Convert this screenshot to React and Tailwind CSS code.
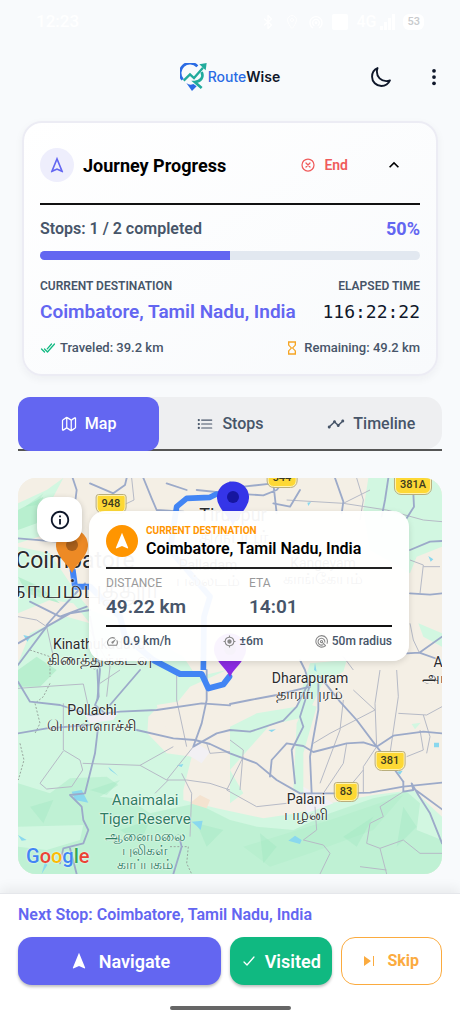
import { useState } from 'react';
import {
  IoBluetooth,
  IoCheckmark,
  IoCheckmarkDoneOutline,
  IoCloseCircleOutline,
  IoEllipsisVertical,
  IoListOutline,
  IoLocationOutline,
  IoMapOutline,
  IoMoonOutline,
} from 'react-icons/io5';
import {
  MdHourglassEmpty,
  MdKeyboardArrowUp,
  MdMyLocation,
  MdNavigation,
  MdOutlineInfo,
  MdOutlineNavigation,
  MdSpeed,
  MdTimeline,
  MdWifiTethering,
} from 'react-icons/md';

const MAP_W = 424;
const MAP_H = 396;

const town = { nameClass: 'text-[14px] leading-[16px]', localClass: 'text-[16px] leading-[16px]' };
const city = { nameClass: 'text-[23px] leading-[28px]', localClass: 'text-[26px] leading-[28px]' };

const places = [
  { name: 'Coimbatore', local: 'கோயம்புத்தூர்', x: 57, y: 97, ...city },
  { name: 'Tiruppur', local: 'திருப்பூர்', x: 215, y: 48, nameClass: 'text-[18px] leading-[22px]', localClass: 'text-[18px] leading-[22px]' },
  { name: 'Palladam', local: 'பல்லடம்', x: 190, y: 95, ...town },
  { name: 'Kangeyam', local: 'காங்கேயம்', x: 305, y: 93, ...town },
  { name: 'Kinathukadavu', local: 'கிணத்துக்கடவு', x: 81, y: 174, ...town },
  { name: 'Dharapuram', local: 'தாராபுரம்', x: 292, y: 208, ...town },
  { name: 'Pollachi', local: 'பொள்ளாச்சி', x: 74, y: 240, ...town },
  { name: 'Palani', local: 'பழனி', x: 288, y: 329, ...town },
  { name: 'Aravakurichi', local: 'அரவக்குறிச்சி', x: 454, y: 192, ...town },
];

const roads = [
  // main highways
  'M188 24 L200 60 195 100 190 300 M350 24 L345 45 310 70 240 40 M400 24 L425 85 440 120 520 125',
  'M24 205 L140 215 M24 585 L110 470 180 430 240 420 M110 465 L150 420 225 340 M60 395 L150 440 230 410',
  'M24 520 L60 500 110 470 M240 440 L270 600 262 690',
  'M560 60 L660 70 760 76 800 60 830 24 M470 40 L530 60 M660 36 L700 50 790 40 800 130 M975 24 L1000 95 995 130',
  'M790 100 L840 110 870 60 M1210 70 L1212 110 1190 145 M1135 24 L1125 90 1115 140 M1200 240 L1260 215 1296 213',
  'M1200 370 L1260 374 1296 370 M1190 550 L1228 548 1296 500 M1228 548 L1290 570 M870 570 L885 600 900 650',
  'M262 600 L266 680 255 705 285 730 M390 600 L300 705 M24 635 L60 695 150 705 240 735 330 725 440 720 575 700 660 706',
  'M24 790 L110 775 240 765 M380 780 L490 805 555 810 600 822 660 850 740 880 800 930 870 970 990 970 1080 968 1180 950 1296 938',
  'M590 600 L590 690 575 760 550 830 620 790 660 780 720 785 820 752 860 710 895 640',
  'M660 702 L720 690 800 675 900 650 M900 645 L870 740 880 770 845 840 855 940 M925 640 L925 720 900 860 905 970',
  'M930 620 L990 695 1040 750 1100 830 1140 880 1180 935',
  'M780 920 L785 870 830 820 880 828 910 846 1010 820 1060 817 1100 830 1150 797 1240 785 1296 790',
  'M1180 935 L1180 965 1210 960 1205 940 1225 975 1260 1030 1296 1120 M1210 955 L1296 1018',
  'M265 765 L255 850 225 970 180 975 215 1010 220 1050 235 1080 220 1120 160 1135 150 1180 M180 1135 L200 1212',
  'M490 1212 L515 1130 510 1110',
];

const lanes = [
  'M24 440 L80 450 110 470 130 560 M330 110 L372 90 365 24 M24 655 L220 642 235 710 M160 700 L160 840 210 870 218 900 185 950 110 957 90 940 160 843',
  'M218 880 L390 886 490 830 M390 886 L470 930 530 930 600 940 660 960 M475 930 L435 970 M470 930 L550 830 M515 910 L545 970 540 1100',
  'M500 600 L500 690 530 830 M660 810 L700 840 690 960 M700 860 L650 960 740 1010 830 1000 M590 820 L600 850 660 845',
  'M830 90 L1000 100 1080 60 M1000 100 L1130 120 1240 150 1296 155 M1040 24 L1060 90 1050 150 M1200 270 L1240 285 1230 370 M1240 290 L1290 290',
  'M1110 600 L1095 700 1100 830 M1160 600 L1165 680 1140 850 M1030 660 L1095 720 960 790 910 820 M1165 730 L1250 735 1296 710 M1240 735 L1260 800 1250 850',
  'M1000 690 L990 780 930 940 M1010 820 L1000 880 940 970 M1060 900 L1010 960 M1100 830 L1060 890 1060 970 M1190 860 L1240 840 1230 780',
  'M1030 600 L1000 560 M1200 460 L1210 510 1228 548 M240 480 L300 590 290 680 M330 600 L270 640',
  'M1180 965 L1110 1010 1120 1040 1080 1060 1070 1120 1110 1135 1180 1110 1230 1150 1296 1150 M1110 1135 L1130 1212',
  'M915 1010 L920 1080 880 1110 940 1125 960 1150 930 1212 M1050 1190 L1130 1200',
];

// Map artwork is drawn at three units per pixel.
function MapArtwork() {
  return (
    <svg className="absolute inset-0 h-full w-full" viewBox="24 24 1272 1188" preserveAspectRatio="none" aria-hidden="true">
      <rect x="24" y="24" width="1272" height="1188" fill="#f4efe5" />
      <g fill="#d2f7e1">
        <path d="M24 100 L110 60 160 24 125 90 150 180 24 220 Z" />
        <path d="M24 230 L120 250 200 370 240 420 340 460 520 560 560 620 650 600 540 650 500 700 450 705 415 740 412 790 470 850 545 860 520 960 520 990 620 1015 760 1045 860 1030 960 1000 1090 975 1210 960 1296 1040 1296 1212 24 1212 Z" />
        <path d="M1075 24 L1296 24 1296 230 1220 260 1200 310 1080 240 1060 120 Z" />
        <path d="M1225 460 L1296 490 1296 530 1240 500 Z M900 580 L1010 570 1000 605 940 635 890 740 780 765 660 900 700 970 660 1000 660 770 740 730 860 710 Z" />
        <path d="M860 760 L890 700 920 710 880 850 880 970 850 960 Z M1205 762 L1232 758 1215 778 Z" />
      </g>
      <path d="M24 430 L120 390 190 400 240 460 170 440 60 490 24 580 Z M430 30 L560 24 500 60 Z" fill="#f4efe5" />
      <path d="M440 705 L500 695 540 705 540 770 480 800 Z" fill="#f4efe5" />
      <g fill="#b8efcf">
        <path d="M24 940 L120 970 180 925 290 920 325 945 270 980 360 990 420 1030 560 1000 660 1050 740 1070 850 1080 960 1030 1090 985 1190 965 1230 1000 1220 1080 1296 1110 1296 1212 24 1212 Z" opacity=".75" />
        <path d="M24 120 L100 80 80 160 24 180 Z M24 320 L90 350 150 400 50 370 Z M24 600 L80 560 140 600 90 650 24 650 Z" />
        <path d="M960 1050 L1180 975 1090 1080 900 1150 780 1190 700 1130 Z" />
      </g>
      <g fill="#99e3bc" opacity=".3">
        <path d="M240 960 L330 930 290 975 Z M60 1010 L130 990 100 1060 Z M330 1080 L420 1050 390 1120 Z M560 1060 L640 1080 590 1130 Z" />
        <path d="M1180 1010 L1220 1070 1160 1130 Z M1000 1100 L1090 1040 1040 1130 Z M750 1090 L800 1130 760 1180 Z" />
        <path d="M45 110 L100 70 80 105 Z M60 340 L100 370 50 360 Z" />
      </g>
      <path d="M24 1070 L220 1065 210 1110 110 1140 24 1130 Z" fill="#d2f7e1" />
      <path d="M535 855 L555 815 600 845 575 880 Z M225 735 L330 720 310 750 240 760 Z M880 950 L970 1000 890 1030 Z" fill="#f2f0f4" />
      <path d="M540 1000 L570 975 600 990 590 1015 Z" fill="#f4e3d0" />
      <g fill="#8ad8ee">
        <path d="M185 965 L215 960 235 998 195 990 Z M295 890 L325 918 300 900 Z M500 886 L520 882 515 891 Z M545 1055 L578 1052 572 1080 560 1068 Z" />
        <path d="M835 1112 L855 1097 875 1110 870 1122 Z M1272 818 H1287 V832 H1272 Z M1255 258 L1270 268 1262 275 Z M892 98 L903 96 895 108 Z M24 1095 L50 1110 35 1112 Z" />
        <path d="M40 495 L62 500 52 515 Z M775 780 L798 778 785 786 Z M1160 905 L1178 902 1170 914 Z M95 1212 L105 1175 112 1185 Z M915 580 L920 605 912 600 Z" />
      </g>
      <g fill="none" stroke="#b6bac6" strokeWidth="3" strokeLinejoin="round">
        {lanes.map((d) => (
          <path key={d} d={d} />
        ))}
      </g>
      <path d="M120 640 L100 680 75 700 90 760 75 790 M30 820 L42 870 25 930 M60 540 L120 560 120 620 M480 1130 H535 L530 1180 545 1212" fill="none" stroke="#9aa79f" strokeWidth="3" strokeDasharray="6 5" />
      <g fill="none" stroke="#9caac9" strokeWidth="5.5" strokeLinejoin="round" strokeLinecap="round">
        {roads.map((d) => (
          <path key={d} d={d} />
        ))}
      </g>
      <path d="M188 300 L195 350 240 350 330 440 345 500 430 570 510 612 575 612 595 655 640 643 658 620" fill="none" stroke="#4285f4" strokeWidth="18" strokeLinejoin="round" strokeLinecap="round" />
      <path d="M580 600 L582 440 600 380 480 240 500 110 530 85 600 82 620 72 660 82" fill="none" stroke="#4285f4" strokeWidth="17" strokeLinejoin="round" />
    </svg>
  );
}

function MapPin({ x, y, fill, dot }) {
  return (
    <svg
      className="absolute h-11 w-8 -translate-x-1/2 -translate-y-full"
      style={{ left: `${(x / MAP_W) * 100}%`, top: `${(y / MAP_H) * 100}%` }}
      viewBox="0 0 32 44"
      aria-hidden="true"
    >
      <path d="M16 44 C13 37 6 32 2.5 25 A16 16 0 1 1 29.5 25 C26 32 19 37 16 44 Z" fill={fill} />
      <circle cx="16" cy="16" r="6" fill={dot} />
    </svg>
  );
}

function RoadShield({ x, y, children }) {
  return (
    <span
      className="absolute -translate-x-1/2 -translate-y-1/2 rounded-b-md rounded-t-xs border border-[#fff3b0] bg-[#fdd835] px-1 text-[11px] font-medium leading-4 text-[#3c3a20] outline outline-[#b9ae7c]"
      style={{ left: `${(x / MAP_W) * 100}%`, top: `${(y / MAP_H) * 100}%` }}
    >
      {children}
    </span>
  );
}

function MapLabel({ place }) {
  return (
    <div
      className="absolute flex -translate-x-1/2 -translate-y-1/2 flex-col items-center whitespace-nowrap text-[#2b2b2b] [text-shadow:0_0_2px_#fff,0_0_2px_#fff]"
      style={{ left: `${(place.x / MAP_W) * 100}%`, top: `${(place.y / MAP_H) * 100}%` }}
    >
      <span className={place.nameClass}>{place.name}</span>
      <span className={place.localClass}>{place.local}</span>
    </div>
  );
}

function Logo() {
  return (
    <svg className="h-7 w-7" viewBox="0 0 80 84" fill="none" aria-hidden="true">
      <path d="M6 50 A28 28 0 0 1 50 10" stroke="#2b6be4" strokeWidth="8" />
      <path d="M63 27 C70 43 60 56 42 57 L63 75" stroke="#22ab9c" strokeWidth="8" />
      <path d="M17 60 Q27 68 38 63 L48 70 L34 84 Z" fill="#2b6be4" />
      <path d="M9 53 L28 34 L40 45 L67 14" stroke="#22ab9c" strokeWidth="7" />
      <path d="M56 4 L78 0 L75 22 Z" fill="#22ab9c" />
    </svg>
  );
}

function RadiusIcon() {
  return (
    <svg className="h-[13px] w-[13px]" viewBox="0 0 24 24" fill="none" stroke="currentColor" strokeWidth="2" aria-hidden="true">
      <path d="M19.5 19.5 A10.6 10.6 0 1 1 22 16" />
      <path d="M15.5 17.5 A6.3 6.3 0 1 1 18 14" />
      <circle cx="12" cy="12" r="2" />
      <path d="M13.5 13.5 L20 20" />
    </svg>
  );
}

function StatusBar() {
  return (
    <div className="flex h-11 items-center justify-between px-9 text-white">
      <span className="text-[17px] font-medium">12:23</span>
      <div className="flex items-center gap-2">
        <IoBluetooth className="h-4 w-4" />
        <IoLocationOutline className="h-4 w-4" />
        <MdWifiTethering className="h-4 w-4" />
        <span className="h-4 w-4 rounded-xs bg-white" />
        <span className="text-base font-medium">4G</span>
        <span className="-ml-1 flex items-end gap-px">
          <span className="h-1 w-[3px] bg-white" />
          <span className="h-2 w-[3px] bg-white" />
          <span className="h-3 w-[3px] bg-white" />
          <span className="h-4 w-[3px] bg-white" />
        </span>
        <span className="rounded-md bg-white px-1 text-[11px] font-medium leading-4 text-[#c9cbcd]">53</span>
      </div>
    </div>
  );
}

function JourneyCard() {
  const [open, setOpen] = useState(true);
  const progress = 50;

  return (
    <section className="mx-[22px] rounded-[20px] border-2 border-[#ececf4] bg-linear-to-br from-white to-[#f8fafc] px-4 pb-4 shadow-[0_3px_8px_rgba(30,41,59,0.05)]">
      <div className="flex h-[82px] items-center border-b-2 border-[#111] pt-1">
        <span className="flex h-[34px] w-[34px] items-center justify-center rounded-full bg-[#eeeefc] text-[#6366f1]">
          <MdOutlineNavigation className="h-5 w-5" />
        </span>
        <h2 className="ml-[9px] flex-1 text-[18px] font-bold text-black">Journey Progress</h2>
        <button type="button" className="flex items-center gap-2 text-sm font-semibold text-[#f05b5b]">
          <IoCloseCircleOutline className="h-4 w-4 [&_path]:[stroke-width:40]" />
          End
        </button>
        <button type="button" aria-label="Toggle details" className="ml-9 mr-4 text-black" onClick={() => setOpen(!open)}>
          <MdKeyboardArrowUp className="h-5 w-5" />
        </button>
      </div>
      {open && (
        <>
          <div className="mt-3 flex items-center justify-between leading-6">
            <span className="text-base font-semibold text-[#475569]">Stops: 1 / 2 completed</span>
            <span className="text-[18px] font-bold text-[#6366f1]">{progress}%</span>
          </div>
          <div className="mt-2.5 h-[9px] overflow-hidden rounded-full bg-[#e2e8f0]">
            <div className="h-full bg-[#6366f1]" style={{ width: `${progress}%` }} />
          </div>
          <div className="mt-[18px] flex justify-between text-xs font-semibold text-[#475569]">
            <span>CURRENT DESTINATION</span>
            <span>ELAPSED TIME</span>
          </div>
          <div className="mt-1 flex items-center justify-between whitespace-nowrap text-[19px] leading-7">
            <span className="font-semibold text-[#6366f1]">Coimbatore, Tamil Nadu, India</span>
            <span className="font-['DejaVu_Sans_Mono',monospace] text-[18px] text-[#0f172a]">116:22:22</span>
          </div>
          <div className="mt-3 flex items-center justify-between text-[13px] font-medium leading-5 text-[#475569]">
            <span className="flex items-center gap-1">
              <IoCheckmarkDoneOutline className="h-4 w-4 text-[#10b981] [&_path]:[stroke-width:40]" />
              Traveled: 39.2 km
            </span>
            <span className="flex items-center gap-1">
              <MdHourglassEmpty className="h-4 w-4 text-[#f5a524]" />
              Remaining: 49.2 km
            </span>
          </div>
        </>
      )}
    </section>
  );
}

const tabs = [
  { id: 'map', label: 'Map', icon: <IoMapOutline className="h-4 w-4 [&_path]:[stroke-width:40]" /> },
  { id: 'stops', label: 'Stops', icon: <IoListOutline className="h-[18px] w-[18px]" /> },
  { id: 'timeline', label: 'Timeline', icon: <MdTimeline className="h-[18px] w-[18px]" /> },
];

function Tabs() {
  const [active, setActive] = useState('map');

  return (
    <div role="tablist" className="relative mx-[18px] mt-[21px] grid grid-cols-3 border-b-2 border-[#555]">
      <div className="absolute inset-0 rounded-2xl bg-[#eeeff1]" />
      {tabs.map(({ id, label, icon }) => (
        <button
          key={id}
          type="button"
          role="tab"
          aria-selected={active === id}
          onClick={() => setActive(id)}
          className={`relative -mb-0.5 flex h-[54px] items-center justify-center gap-2 rounded-xl text-base font-medium ${
            active === id ? 'bg-[#6366f1] text-white' : 'text-[#475569]'
          }`}
        >
          {icon}
          {label}
        </button>
      ))}
    </div>
  );
}

function DestinationCard() {
  return (
    <div className="absolute left-[71px] right-[33px] top-[33px] rounded-2xl bg-white/95 px-[17px] pb-3 pt-3 shadow-[0_2px_6px_rgba(0,0,0,0.12)]">
      <div className="flex items-center gap-2 border-b-2 border-[#222] pb-2">
        <span className="flex h-8 w-8 items-center justify-center rounded-full bg-[#ff9500] text-white">
          <MdNavigation className="h-5 w-5" />
        </span>
        <div>
          <p className="text-[10px] font-bold leading-4 text-[#ff9500]">CURRENT DESTINATION</p>
          <p className="whitespace-nowrap text-base font-semibold leading-5 text-black">Coimbatore, Tamil Nadu, India</p>
        </div>
      </div>
      <div className="grid grid-cols-2 border-b-2 border-[#111] py-1.5">
        <div>
          <p className="text-xs leading-4 text-[#999]">DISTANCE</p>
          <p className="mt-1 text-[19px] font-semibold leading-6 text-[#475569]">49.22 km</p>
        </div>
        <div>
          <p className="text-xs leading-4 text-[#999]">ETA</p>
          <p className="mt-1 text-[19px] font-semibold leading-6 text-[#475569]">14:01</p>
        </div>
      </div>
      <div className="flex items-center justify-between pt-1.5 text-xs font-medium leading-4 text-[#475569]">
        <span className="flex items-center gap-1">
          <MdSpeed className="h-[13px] w-[13px] text-[#888]" />
          0.9 km/h
        </span>
        <span className="flex items-center gap-1">
          <MdMyLocation className="h-[13px] w-[13px] text-[#888]" />
          ±6m
        </span>
        <span className="flex items-center gap-1">
          <span className="text-[#888]">
            <RadiusIcon />
          </span>
          50m radius
        </span>
      </div>
    </div>
  );
}

function MapView() {
  return (
    <div className="relative mx-[18px] mt-[27px] aspect-[106/99] overflow-hidden rounded-[18px] bg-[#f4efe5]">
      <MapArtwork />
      {places.map((place) => (
        <MapLabel key={place.name} place={place} />
      ))}
      <div className="absolute left-[30%] top-[79%] flex -translate-x-1/2 flex-col items-center whitespace-nowrap text-[#2f7d63] [text-shadow:0_0_2px_#fff,0_0_2px_#fff]">
        <span className="text-[15px] leading-[19px]">Anaimalai</span>
        <span className="text-[15px] leading-[19px]">Tiger Reserve</span>
        <span className="text-[14px] leading-[14px]">ஆனைமலை</span>
        <span className="text-[14px] leading-[14px]">புலிகள்</span>
        <span className="text-[14px] leading-[14px]">காப்பகம்</span>
      </div>
      <RoadShield x={93} y={26}>948</RoadShield>
      <RoadShield x={264} y={0}>544</RoadShield>
      <RoadShield x={395} y={7}>381A</RoadShield>
      <RoadShield x={372} y={283}>381</RoadShield>
      <RoadShield x={328} y={314}>83</RoadShield>
      <MapPin x={54} y={95} fill="#ed8a25" dot="#a9601c" />
      <MapPin x={215} y={47} fill="#3535e8" dot="#1616a0" />
      <MapPin x={212} y={199} fill="#8b2be2" dot="#5a14a0" />
      <div className="absolute bottom-1 left-2 text-[20px] font-medium leading-7 [text-shadow:0_0_2px_#fff]">
        <span className="text-[#4285f4]">G</span>
        <span className="text-[#ea4335]">o</span>
        <span className="text-[#fbbc05]">o</span>
        <span className="text-[#4285f4]">g</span>
        <span className="text-[#34a853]">l</span>
        <span className="text-[#ea4335]">e</span>
      </div>
      <DestinationCard />
      <button
        type="button"
        aria-label="Map information"
        className="absolute left-[19px] top-[19px] flex h-[45px] w-[45px] items-center justify-center rounded-[14px] bg-white text-[#0f172a] shadow-[0_2px_6px_rgba(0,0,0,0.2)]"
      >
        <MdOutlineInfo className="h-[22px] w-[22px]" />
      </button>
    </div>
  );
}

function ActionBar() {
  return (
    <footer className="mt-[19px] border-t border-[#e5e7eb] bg-white px-[18px] pb-3.5 shadow-[0_-4px_12px_rgba(0,0,0,0.07)]">
      <p className="pt-[9px] text-base font-semibold leading-6 text-[#6366f1]">Next Stop: Coimbatore, Tamil Nadu, India</p>
      <div className="mt-2.5 grid grid-cols-[2fr_1fr_1fr] gap-[9px]">
        <button type="button" className="flex h-12 items-center justify-center gap-2.5 rounded-[14px] bg-[#6366f1] text-[18px] font-semibold text-white shadow-[0_2px_3px_rgba(0,0,0,0.25)]">
          <MdNavigation className="h-5 w-5" />
          Navigate
        </button>
        <button type="button" className="flex h-12 items-center justify-center gap-2 rounded-[14px] bg-[#10b981] text-[18px] font-semibold text-white shadow-[0_2px_3px_rgba(0,0,0,0.25)]">
          <IoCheckmark className="h-4 w-4 [&_path]:[stroke-width:40]" />
          Visited
        </button>
        <button type="button" className="flex h-12 items-center justify-center gap-3 rounded-[14px] border border-[#fbab3f] text-base font-bold text-[#fbab3f]">
          <svg className="h-3 w-3" viewBox="0 0 12 12" fill="currentColor" aria-hidden="true">
            <path d="M1 1 L8 6 L1 11 Z M10 1 H11 V11 H10 Z" />
          </svg>
          Skip
        </button>
      </div>
      <div className="mx-auto mt-[21px] h-1 w-[121px] rounded-full bg-[#666]" />
    </footer>
  );
}

export default function App() {
  return (
    <div className="min-h-screen bg-[#f8fafc] font-[Roboto,'Noto_Sans',sans-serif]">
      <StatusBar />
      <header className="grid h-[77px] grid-cols-[1fr_auto_1fr] items-center pb-3">
        <span />
        <div className="flex items-center text-[14px] font-semibold text-[#0f172a]">
          <Logo />
          <span className="font-[Inter,sans-serif]">
            <span className="font-medium text-[#2b6be4]">Route</span>Wise
          </span>
        </div>
        <div className="flex items-center justify-end gap-8 pr-4 text-[#0f172a]">
          <button type="button" aria-label="Dark mode">
            <IoMoonOutline className="h-[22px] w-[22px] [&_path]:[stroke-width:44]" />
          </button>
          <button type="button" aria-label="More options">
            <IoEllipsisVertical className="h-5 w-5" />
          </button>
        </div>
      </header>
      <JourneyCard />
      <Tabs />
      <MapView />
      <ActionBar />
    </div>
  );
}
